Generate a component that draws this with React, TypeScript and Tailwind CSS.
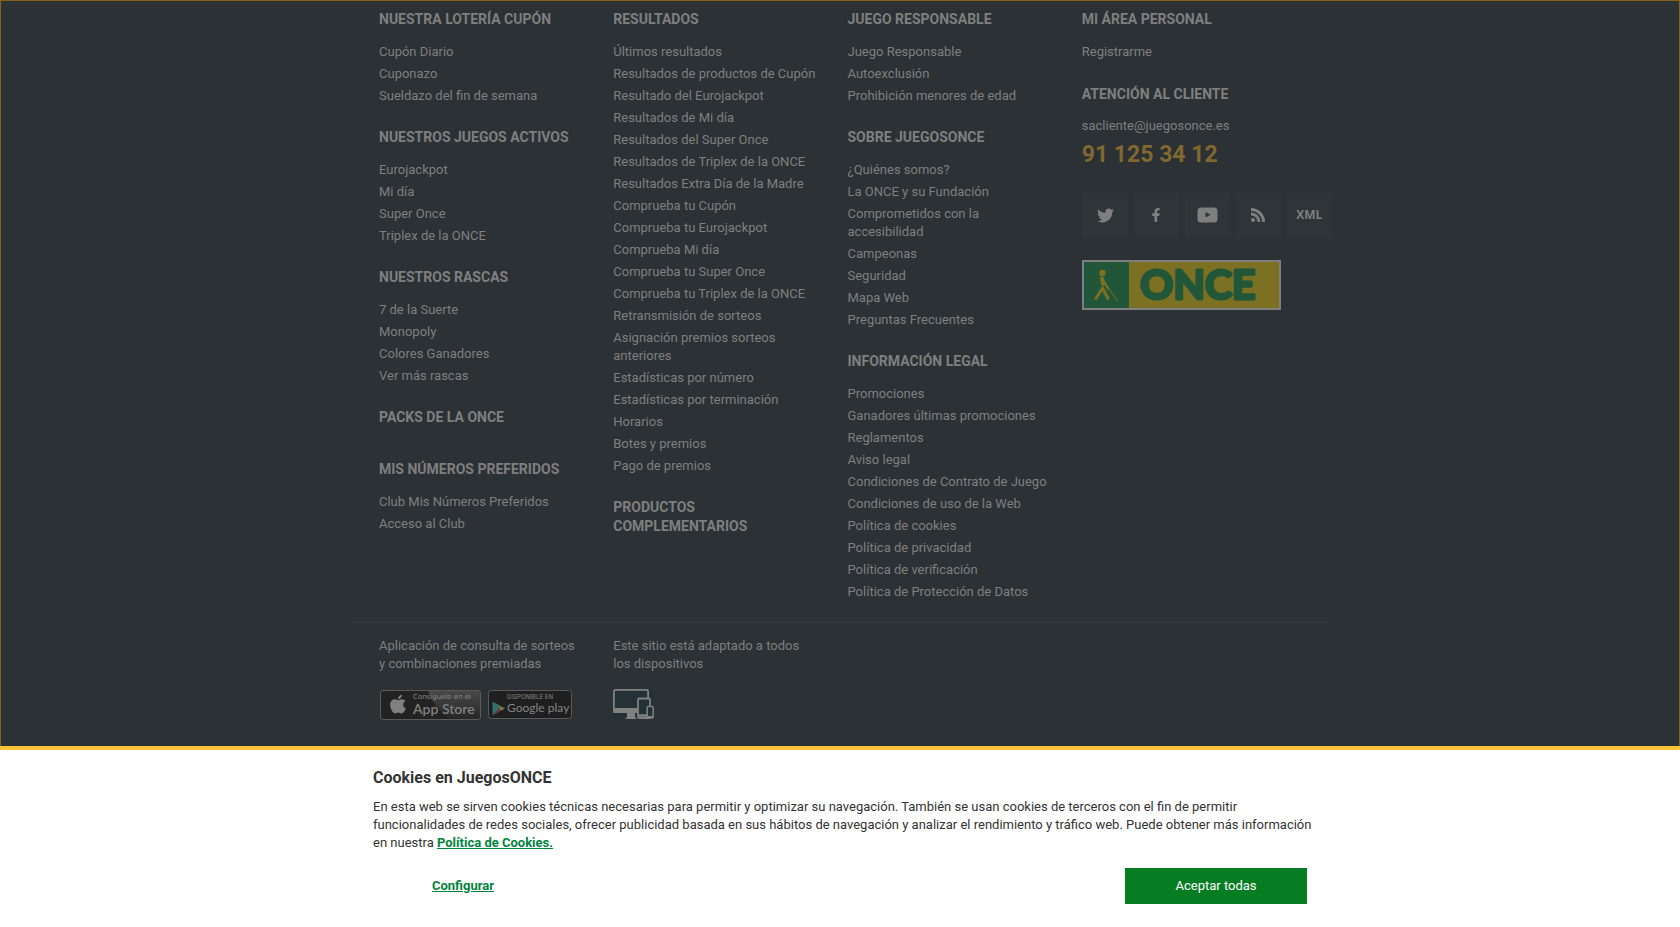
import type { ReactNode } from "react";
import { FaFacebookF, FaTwitter } from "react-icons/fa";

type Group = { title: string; links: string[] };

const gameGroups: Group[] = [
  { title: "NUESTRA LOTERÍA CUPÓN", links: ["Cupón Diario", "Cuponazo", "Sueldazo del fin de semana"] },
  { title: "NUESTROS JUEGOS ACTIVOS", links: ["Eurojackpot", "Mi día", "Super Once", "Triplex de la ONCE"] },
  { title: "NUESTROS RASCAS", links: ["7 de la Suerte", "Monopoly", "Colores Ganadores", "Ver más rascas"] },
  { title: "PACKS DE LA ONCE", links: [] },
  { title: "MIS NÚMEROS PREFERIDOS", links: ["Club Mis Números Preferidos", "Acceso al Club"] },
];

const resultGroups: Group[] = [
  {
    title: "RESULTADOS",
    links: [
      "Últimos resultados",
      "Resultados de productos de Cupón",
      "Resultado del Eurojackpot",
      "Resultados de Mi día",
      "Resultados del Super Once",
      "Resultados de Triplex de la ONCE",
      "Resultados Extra Día de la Madre",
      "Comprueba tu Cupón",
      "Comprueba tu Eurojackpot",
      "Comprueba Mi día",
      "Comprueba tu Super Once",
      "Comprueba tu Triplex de la ONCE",
      "Retransmisión de sorteos",
      "Asignación premios sorteos anteriores",
      "Estadísticas por número",
      "Estadísticas por terminación",
      "Horarios",
      "Botes y premios",
      "Pago de premios",
    ],
  },
  { title: "PRODUCTOS COMPLEMENTARIOS", links: [] },
];

const infoGroups: Group[] = [
  { title: "JUEGO RESPONSABLE", links: ["Juego Responsable", "Autoexclusión", "Prohibición menores de edad"] },
  {
    title: "SOBRE JUEGOSONCE",
    links: [
      "¿Quiénes somos?",
      "La ONCE y su Fundación",
      "Comprometidos con la accesibilidad",
      "Campeonas",
      "Seguridad",
      "Mapa Web",
      "Preguntas Frecuentes",
    ],
  },
  {
    title: "INFORMACIÓN LEGAL",
    links: [
      "Promociones",
      "Ganadores últimas promociones",
      "Reglamentos",
      "Aviso legal",
      "Condiciones de Contrato de Juego",
      "Condiciones de uso de la Web",
      "Política de cookies",
      "Política de privacidad",
      "Política de verificación",
      "Política de Protección de Datos",
    ],
  },
];

function GroupTitle({ children }: { children: ReactNode }) {
  return <h2 className="text-[14px] leading-[19px] font-bold">{children}</h2>;
}

function LinkGroup({ title, links }: Group) {
  return (
    <section className={links.length > 0 ? "pb-[23px]" : "pb-[33px]"}>
      <GroupTitle>{title}</GroupTitle>
      {links.length > 0 && (
        <ul className="mt-[14px] flex flex-col gap-1">
          {links.map((link) => (
            <li key={link} className="leading-[18px]">
              <a href="#">{link}</a>
            </li>
          ))}
        </ul>
      )}
    </section>
  );
}

function Column({ groups }: { groups: Group[] }) {
  return (
    <div className="pr-7">
      {groups.map((group) => (
        <LinkGroup key={group.title} {...group} />
      ))}
    </div>
  );
}

function SocialLink({ label, children }: { label: string; children: ReactNode }) {
  return (
    <a
      href="#"
      aria-label={label}
      className="flex h-11 w-[45px] shrink-0 items-center justify-center bg-[#2d3539] text-[#7f7f7f]"
    >
      {children}
    </a>
  );
}

function OnceLogo() {
  return (
    <svg width="199" height="50" viewBox="0 0 199 50" role="img" aria-label="ONCE">
      <rect width="199" height="50" fill="#7f7f7f" />
      <rect x="2" y="2" width="45" height="46" fill="#225638" />
      <rect x="47" y="2" width="150" height="46" fill="#7c7122" />
      <g stroke="#7c7122" fill="none" strokeLinecap="round" strokeLinejoin="round">
        <circle cx="20.500" cy="13" r="3.200" fill="#7c7122" stroke="none" />
        <path d="M20 18.500 L21 24" strokeWidth="4" />
        <path d="M21 20 L26 28.500" strokeWidth="2.400" />
        <path d="M20.500 28 L14 38.500 M20.500 28 L26 38.500" strokeWidth="3" />
        <path d="M26.500 28 L35 40.500" strokeWidth="1" />
      </g>
      <text
        x="58"
        y="39"
        fontFamily="Lato, sans-serif"
        fontWeight="700"
        fontSize="41"
        fill="#225638"
        stroke="#225638"
        strokeWidth="3"
        strokeLinejoin="round"
      >
        ONCE
      </text>
    </svg>
  );
}

function AppStoreBadge() {
  return (
    <svg width="101" height="30" viewBox="0 0 101 30" role="img" aria-label="App Store">
      <defs>
        <linearGradient id="gloss" x1="0" y1="0" x2="0" y2="1">
          <stop offset="0" stopColor="#484848" />
          <stop offset="1" stopColor="#262626" />
        </linearGradient>
      </defs>
      <rect x="0.500" y="0.500" width="100" height="29" rx="2.500" fill="#222222" />
      <path d="M48 1 H98 Q100 1 100 3 V29 H70 Q54 18 48 1 Z" fill="url(#gloss)" />
      <rect x="0.500" y="0.500" width="100" height="29" rx="2.500" fill="none" stroke="#5a5a5a" />
      <path
        transform="translate(10 3.500) scale(0.0415)"
        fill="#808080"
        d="M318.700 268.700c-.2-36.700 16.400-64.400 50-84.800-18.800-26.900-47.200-41.700-84.700-44.600-35.500-2.800-74.300 20.700-88.500 20.700-15 0-49.400-19.700-76.400-19.700C63.300 141.200 4 184.800 4 273.500q0 39.300 14.400 81.200c12.800 36.700 59 126.700 107.200 125.200 25.200-.6 43-17.900 75.800-17.900 31.800 0 48.300 17.900 76.400 17.900 48.600-.7 90.400-82.500 102.600-119.300-65.200-30.700-61.700-90-61.700-91.900zm-56.600-164.200c27.300-32.400 24.800-61.900 24-72.500-24.100 1.400-52 16.400-67.900 34.900-17.500 19.800-27.800 44.300-25.600 71.900 26.100 2 49.900-11.400 69.500-34.300z"
      />
      <text x="33" y="9" fontFamily="'DejaVu Sans', sans-serif" fontSize="7" fill="#8a8a8a">
        Consíguelo en el
      </text>
      <text x="33" y="24" fontFamily="Lato, sans-serif" fontSize="14" fontWeight="600" fill="#808080">
        App Store
      </text>
    </svg>
  );
}

function GooglePlayBadge() {
  return (
    <svg width="84" height="29" viewBox="0 0 84 29" role="img" aria-label="Google play">
      <rect x="0.500" y="0.500" width="83" height="28" rx="3" fill="#1f1f1f" stroke="#5a5a5a" />
      <path d="M4.500 11.500 V25.500 L11 18.500 Z" fill="#32706f" />
      <path d="M4.500 11.500 L13 16.300 L11 18.500 Z" fill="#4b7553" />
      <path d="M13 16.300 L17 18.500 L13 20.700 L11 18.500 Z" fill="#817443" />
      <path d="M4.500 25.500 L13 20.700 L11 18.500 Z" fill="#743848" />
      <text x="19" y="8.500" fontFamily="Roboto, sans-serif" fontSize="6.500" fill="#808080">
        DISPONIBLE EN
      </text>
      <text x="19" y="22" fontFamily="Lato, sans-serif" fontSize="12" fill="#858585">
        Google play
      </text>
    </svg>
  );
}

function DevicesIcon() {
  return (
    <svg width="41" height="30" viewBox="0 0 41 30" aria-hidden="true">
      <rect width="41" height="30" fill="#243237" />
      <rect x="0.900" y="0.900" width="34.200" height="21" rx="1.500" fill="none" stroke="#808080" strokeWidth="1.800" />
      <rect x="0" y="19" width="36" height="5" rx="1" fill="#808080" />
      <path d="M14 24 H22 V28 L24 30 H12 L14 28 Z" fill="#808080" />
      <rect x="25" y="9.500" width="12" height="19.500" rx="1.200" fill="#243237" stroke="#808080" strokeWidth="1.800" />
      <path d="M25 26.500 H35" stroke="#808080" strokeWidth="2.500" />
      <rect x="34.200" y="17.500" width="6" height="11.500" rx="1" fill="#243237" stroke="#808080" strokeWidth="1.500" />
      <path d="M34 28 H40" stroke="#808080" strokeWidth="2" />
    </svg>
  );
}

export default function App() {
  return (
    <div className="flex min-h-screen flex-col bg-white font-[Roboto,sans-serif] text-[13px] leading-[18px]">
      <footer className="flex-1 border-x border-t border-[#86621a] bg-[#2c3135] px-4 pb-6 text-[#7f7f7f]">
        <div className="mx-auto max-w-[980px]">
          <div className="-mb-[2px] grid grid-cols-4 pt-[9px] pr-[14px] pl-[29px]">
            <Column groups={gameGroups} />
            <Column groups={resultGroups} />
            <Column groups={infoGroups} />
            <div>
              <LinkGroup title="MI ÁREA PERSONAL" links={["Registrarme"]} />
              <div className="pt-px">
                <GroupTitle>ATENCIÓN AL CLIENTE</GroupTitle>
                <a href="#" className="mt-[13px] block">
                  sacliente@juegosonce.es
                </a>
                <p className="mt-[6px] text-[23px] leading-7 font-bold text-[#80682e]">91 125 34 12</p>
              </div>
              <div className="mt-6 flex gap-[6px] pl-px">
                <SocialLink label="Twitter">
                  <FaTwitter size={17} />
                </SocialLink>
                <SocialLink label="Facebook">
                  <FaFacebookF size={14} />
                </SocialLink>
                <SocialLink label="YouTube">
                  <svg width="21" height="16" viewBox="0 0 21 16" aria-hidden="true">
                    <rect x="0.500" y="0.500" width="20" height="15" rx="3.500" fill="#7f7f7f" />
                    <path d="M8.500 5 L13.500 7.800 L8.500 10.600 Z" fill="#2d3539" />
                  </svg>
                </SocialLink>
                <SocialLink label="RSS">
                  <svg width="14" height="14" viewBox="0 0 14 14" fill="none" aria-hidden="true">
                    <circle cx="2" cy="12" r="2" fill="#7f7f7f" />
                    <path d="M0 6 A8 8 0 0 1 8 14" stroke="#7f7f7f" strokeWidth="2.800" />
                    <path d="M0 1.500 A12.500 12.500 0 0 1 12.500 14" stroke="#7f7f7f" strokeWidth="3" />
                  </svg>
                </SocialLink>
                <SocialLink label="XML">
                  <span className="font-['Open_Sans',sans-serif] text-[12px] font-bold">XML</span>
                </SocialLink>
              </div>
              <a href="#" className="mt-[23px] block">
                <OnceLogo />
              </a>
            </div>
          </div>

          <div className="grid grid-cols-4 border-t border-[#353a3d] pt-[14px] pr-[14px] pl-[29px]">
            <div>
              <p className="pr-9">Aplicación de consulta de sorteos y combinaciones premiadas</p>
              <div className="mt-[17px] flex gap-[7px] pl-px">
                <a href="#" className="shrink-0">
                  <AppStoreBadge />
                </a>
                <a href="#" className="shrink-0">
                  <GooglePlayBadge />
                </a>
              </div>
            </div>
            <div>
              <p className="mb-4 pr-9">Este sitio está adaptado a todos los dispositivos</p>
              <DevicesIcon />
            </div>
          </div>
        </div>
      </footer>

      <section
        role="dialog"
        aria-labelledby="cookies-title"
        className="border-t-4 border-[#fac436] bg-white px-4 pt-[17px] pb-[23px] text-[#333333]"
      >
        <div className="mx-auto max-w-[934px]">
          <h2 id="cookies-title" className="text-[16px] leading-[22px] font-bold">
            Cookies en JuegosONCE
          </h2>
          <p className="mt-[9px] -mr-2">
            En esta web se sirven cookies técnicas necesarias para permitir y optimizar su navegación. También se usan
            cookies de terceros con el fin de permitir funcionalidades de redes sociales, ofrecer publicidad basada en
            sus hábitos de navegación y analizar el rendimiento y tráfico web. Puede obtener más información en nuestra{" "}
            <a href="#" className="font-bold text-[#00843d] underline">
              Política de Cookies.
            </a>
          </p>
          <div className="mt-4 flex justify-between">
            <button type="button" className="h-9 w-[180px] font-bold text-[#00843d] underline">
              Configurar
            </button>
            <button type="button" className="h-9 w-[182px] bg-[#067d23] text-white">
              Aceptar todas
            </button>
          </div>
        </div>
      </section>
    </div>
  );
}
